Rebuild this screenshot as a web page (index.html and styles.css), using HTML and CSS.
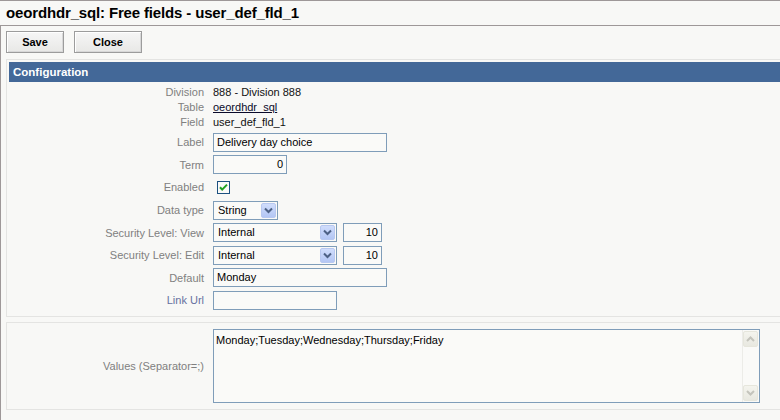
FILE: index.html
```html
<!DOCTYPE html>
<html>
<head>
<meta charset="utf-8">
<title>Free fields</title>
<link rel="stylesheet" href="styles.css">
</head>
<body>
<div class="page">
  <h1 class="title">oeordhdr_sql: Free fields - user_def_fld_1</h1>
  <div class="main">
    <div class="toolbar">
      <button class="btn btn-save">Save</button>
      <button class="btn btn-close">Close</button>
    </div>

    <section class="panel">
      <div class="panel-head">Configuration</div>
      <div class="form">
        <div class="row text-row"><span class="lbl">Division</span><span class="val">888 - Division 888</span></div>
        <div class="row text-row"><span class="lbl">Table</span><a class="val link" href="#">oeordhdr_sql</a></div>
        <div class="row text-row last-text"><span class="lbl">Field</span><span class="val">user_def_fld_1</span></div>

        <div class="row in-row"><span class="lbl">Label</span><div class="val"><span class="input w-label">Delivery day choice</span></div></div>
        <div class="row in-row"><span class="lbl">Term</span><div class="val"><span class="input w-term num">0</span></div></div>
        <div class="row in-row"><span class="lbl">Enabled</span><div class="val"><span class="check"><svg width="11" height="11" viewBox="0 0 11 11"><path d="M2 5.2 L4.2 7.6 L9 2.6" fill="none" stroke="#21a121" stroke-width="2"/></svg></span></div></div>
        <div class="row in-row"><span class="lbl">Data type</span><div class="val"><span class="select w-type"><span class="sel-text">String</span><span class="drop"><svg width="9" height="7" viewBox="0 0 9 7"><path d="M1 1.5 L4.5 5 L8 1.5" fill="none" stroke="#4d6185" stroke-width="2"/></svg></span></span></div></div>
        <div class="row in-row"><span class="lbl">Security Level: View</span><div class="val pair"><span class="select w-sec"><span class="sel-text">Internal</span><span class="drop"><svg width="9" height="7" viewBox="0 0 9 7"><path d="M1 1.5 L4.5 5 L8 1.5" fill="none" stroke="#4d6185" stroke-width="2"/></svg></span></span><span class="input w-num num">10</span></div></div>
        <div class="row in-row"><span class="lbl">Security Level: Edit</span><div class="val pair"><span class="select w-sec"><span class="sel-text">Internal</span><span class="drop"><svg width="9" height="7" viewBox="0 0 9 7"><path d="M1 1.5 L4.5 5 L8 1.5" fill="none" stroke="#4d6185" stroke-width="2"/></svg></span></span><span class="input w-num num">10</span></div></div>
        <div class="row in-row"><span class="lbl">Default</span><div class="val"><span class="input w-label">Monday</span></div></div>
        <div class="row in-row"><span class="lbl lbl-link">Link Url</span><div class="val"><span class="input w-sec"></span></div></div>
      </div>
    </section>

    <section class="panel panel-values">
      <div class="values-row">
        <span class="lbl">Values (Separator=;)</span>
        <div class="textbox">
          <div class="textbox-text">Monday;Tuesday;Wednesday;Thursday;Friday</div>
          <div class="scrollbar">
            <span class="sb-btn"><svg width="9" height="6" viewBox="0 0 9 6"><path d="M1 5 L4.5 1.5 L8 5" fill="none" stroke="#c4c4bc" stroke-width="2"/></svg></span>
            <span class="sb-track"></span>
            <span class="sb-btn"><svg width="9" height="6" viewBox="0 0 9 6"><path d="M1 1 L4.5 4.5 L8 1" fill="none" stroke="#c4c4bc" stroke-width="2"/></svg></span>
          </div>
        </div>
      </div>
    </section>
  </div>
</div>
</body>
</html>
```

FILE: styles.css
```css
html, body {
  margin: 0;
  padding: 0;
  background: #f8f8f6;
  overflow: hidden;
}

body {
  width: 780px;
  height: 420px;
  font-family: "Liberation Sans", Arial, sans-serif;
  font-size: 11px;
  color: #111;
}

.title {
  margin: 0;
  height: 24px;
  line-height: 24px;
  border-top: 1px solid #9e9898;
  border-bottom: 1px solid #9e9898;
  padding-left: 6px;
  font-size: 15px;
  letter-spacing: -0.15px;
  font-weight: bold;
  color: #000;
}

.main {
  border-left: 1px solid #9e9898;
  padding: 5px 0 0 5px;
  height: 400px;
}

.toolbar {
  display: flex;
  gap: 10px;
  height: 22px;
}

.btn {
  height: 22px;
  margin: 0;
  padding: 0;
  border: 1px solid #9c9c9c;
  box-shadow: inset 1px 1px 0 #ffffff, inset -1px -1px 0 #d8d8d8;
  background: linear-gradient(#f6f6f6, #e8e8e6);
  font-family: "Liberation Sans", Arial, sans-serif;
  font-size: 11px;
  font-weight: bold;
  color: #000;
}

.btn-save { width: 58px; }
.btn-close { width: 68px; }

.panel {
  margin-top: 6px;
  margin-right: -12px;
  border: 1px solid #e4e4e2;
  padding: 2px 2px 0 2px;
}

.panel-head {
  height: 20px;
  line-height: 20px;
  background: #436898;
  color: #fff;
  font-weight: bold;
  font-size: 11.5px;
  padding-left: 4px;
}

.form {
  padding: 2px 0 4px;
}

.row {
  display: grid;
  grid-template-columns: 195px 1fr;
  column-gap: 9px;
  align-items: center;
}

.text-row { height: 15px; }
.last-text { margin-bottom: 2px; }
.in-row { height: 22.6px; }

.lbl {
  text-align: right;
  color: #808080;
  white-space: nowrap;
}

.lbl-link { color: #6670a0; }

.val { display: flex; align-items: center; }

.link {
  color: #0a0a2a;
  text-decoration: underline;
}

.pair { gap: 6px; }

.input {
  box-sizing: border-box;
  display: block;
  height: 19px;
  line-height: 17px;
  border: 1px solid #7f9db9;
  background: #fafaf8;
  padding: 0 3px;
  color: #000;
  white-space: nowrap;
  overflow: hidden;
}

.num { text-align: right; }

.w-label { width: 174px; }
.w-term { width: 74px; }
.w-num { width: 39px; }
.w-sec { width: 124px; }
.w-type { width: 65px; }

.check {
  box-sizing: border-box;
  display: flex;
  align-items: center;
  justify-content: center;
  width: 13px;
  height: 13px;
  margin-left: 4px;
  border: 1px solid #1c5180;
  background: #fafaf8;
}

.select {
  box-sizing: border-box;
  display: flex;
  align-items: center;
  height: 19px;
  border: 1px solid #7f9db9;
  background: #fafaf8;
  padding: 1px;
}

.sel-text {
  flex: 1;
  padding-left: 3px;
  color: #000;
  line-height: 15px;
}

.drop {
  box-sizing: border-box;
  display: flex;
  align-items: center;
  justify-content: center;
  width: 15px;
  height: 15px;
  border-radius: 2px;
  border: 1px solid #b8c8f0;
  background: linear-gradient(#d0ddfc, #b3c6f4);
}

.panel-values {
  margin-top: 5px;
  padding: 6px 2px 6px 2px;
}

.values-row {
  display: grid;
  grid-template-columns: 195px 547px;
  column-gap: 9px;
  align-items: center;
}

.textbox {
  box-sizing: border-box;
  height: 74px;
  border: 1px solid #7f9db9;
  background: #fafaf8;
  display: flex;
}

.textbox-text {
  flex: 1;
  padding: 4px 2px;
  color: #000;
}

.scrollbar {
  width: 16px;
  display: flex;
  flex-direction: column;
  padding: 1px 0 1px 0;
  border-left: 1px solid #ecece8;
}

.sb-btn {
  box-sizing: border-box;
  display: flex;
  align-items: center;
  justify-content: center;
  height: 16px;
  width: 15px;
  margin-left: 0;
  border: 1px solid #e6e6dc;
  border-radius: 2px;
  background: linear-gradient(#f4f4ee, #e8e8e0);
}

.sb-track { flex: 1; }
```
